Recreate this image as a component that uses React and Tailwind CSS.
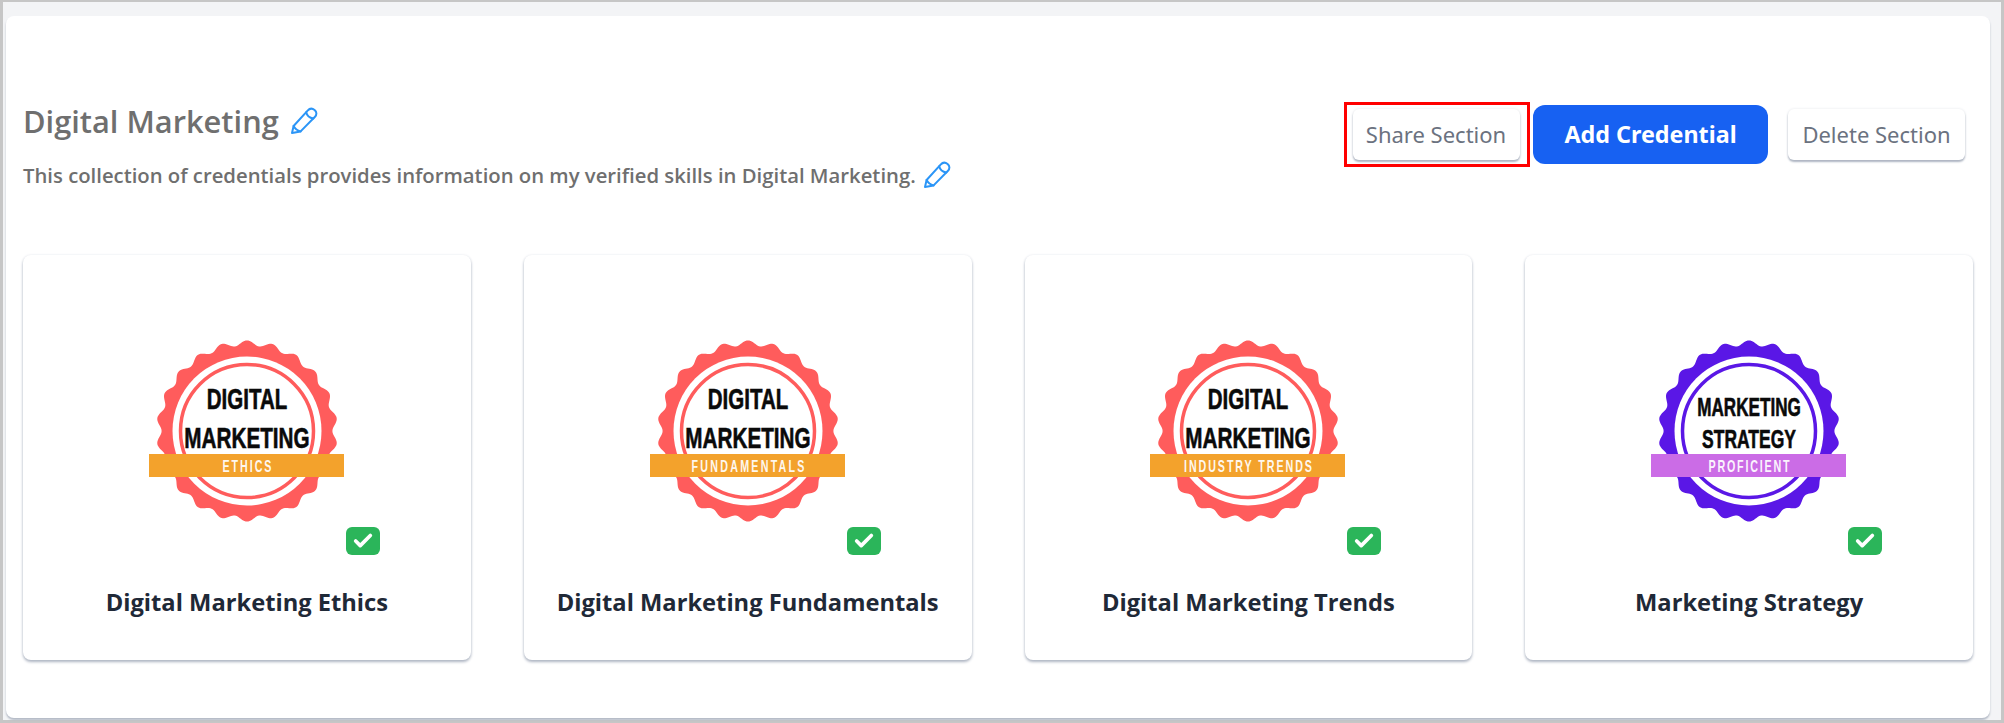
import { Check } from 'lucide-react';

// scalloped seal edge, 22 bumps
function sealPath(cx, cy) {
    const pts = [];
    for (let i = 0; i < 440; i++) {
        const t = (i / 440) * Math.PI * 2;
        const r = 88 + 2.6 * Math.cos(22 * t);
        pts.push(`${(cx + r * Math.sin(t)).toFixed(2)},${(cy - r * Math.cos(t)).toFixed(2)}`);
    }
    return `M${pts.join('L')}Z`;
}

function Seal({ color, ribbon, lines, label, labelWidth }) {
    return (
        <svg width="200" height="184" viewBox="0 0 200 184">
            <path d={sealPath(100, 92)} fill={color} />
            <circle cx="100" cy="92" r="74.5" fill="#fff" />
            <circle cx="100" cy="92" r="66.5" fill="none" stroke={color} strokeWidth="3.5" />
            {lines.map((l) => (
                <g key={l.text} transform={`translate(100 ${l.y}) scale(${l.sx} 1)`}>
                    <text
                        textAnchor="middle"
                        fontFamily="'Liberation Sans', sans-serif"
                        fontWeight="700"
                        fontSize={l.size}
                        fill="#0a0a0a"
                        stroke="#0a0a0a"
                        strokeWidth="0.6"
                    >
                        {l.text}
                    </text>
                </g>
            ))}
            <rect x="2" y="115" width="195" height="23" fill={ribbon} />
            <g transform="translate(100 133) scale(0.65 1)">
                <text
                    textAnchor="middle"
                    textLength={labelWidth / 0.65}
                    lengthAdjust="spacing"
                    fontFamily="'Liberation Sans', sans-serif"
                    fontWeight="700"
                    fontSize="16.5"
                    fill="#fff"
                    opacity="0.92"
                >
                    {label}
                </text>
            </g>
        </svg>
    );
}

function PencilIcon({ className }) {
    return (
        <svg className={className} viewBox="0 0 28 28" fill="none" stroke="#2b95f7" strokeWidth="2" strokeLinejoin="round" strokeLinecap="round">
            <path d="M2 26 L3.6 19 L17.6 3.6 C19.6 1.4 22.4 1.2 24.6 3 C26.8 4.9 27 7.6 25 9.8 L10.6 24.4 Z" />
            <path d="M16.2 5.2 C16.8 8 19.6 10.8 23.4 11.4" />
            <path d="M3.6 19 C5 21.6 7.4 23.6 10.6 24.4" />
        </svg>
    );
}

const digital = [
    { text: 'DIGITAL', y: 70, sx: 0.683, size: 30 },
    { text: 'MARKETING', y: 109, sx: 0.69, size: 30 },
];

const credentials = [
    { title: 'Digital Marketing Ethics', color: '#ff5c5c', ribbon: '#f3a22c', lines: digital, label: 'ETHICS', labelWidth: 49 },
    { title: 'Digital Marketing Fundamentals', color: '#ff5c5c', ribbon: '#f3a22c', lines: digital, label: 'FUNDAMENTALS', labelWidth: 113 },
    { title: 'Digital Marketing Trends', color: '#ff5c5c', ribbon: '#f3a22c', lines: digital, label: 'INDUSTRY TRENDS', labelWidth: 128 },
    {
        title: 'Marketing Strategy',
        color: '#5a17e6',
        ribbon: '#cb6ce6',
        lines: [
            { text: 'MARKETING', y: 77, sx: 0.685, size: 25 },
            { text: 'STRATEGY', y: 109, sx: 0.7, size: 25 },
        ],
        label: 'PROFICIENT',
        labelWidth: 81,
    },
];

const sectionButton = 'h-[51px] rounded-md bg-white shadow-[0_2px_2px_#aeb5c2,0_0_3px_#e5e7eb] text-[22px] text-[#6b7280]';

export default function App() {
    return (
        <div className="w-[2004px] h-[723px] border-t-2 border-l-[3px] border-r-[3px] border-b-[3px] border-[#c6c6c6] bg-[#f3f4f6] pt-[14px] pl-[3px] font-['Noto_Sans',sans-serif]">
            <div className="w-[1984px] h-[702px] rounded-lg bg-white shadow-[0_2px_2px_#b4bac6] pt-[85px] pl-[17px] pr-[17px]">
                {/* Section header */}
                <div className="flex justify-between pr-[8px]">
                    <div>
                        <div className="flex items-center gap-[11px] h-[40px]">
                            <h1 className="text-[30.8px] leading-[40px] font-semibold text-[#6f6f6f] font-['Open_Sans',sans-serif]">Digital Marketing</h1>
                            <PencilIcon className="w-[28px] h-[28px]" />
                        </div>
                        <div className="flex items-center gap-[7px] h-[28px] mt-[20px]">
                            <p className="text-[20.3px] leading-[28px] font-semibold text-[#6f6f6f] font-['Open_Sans',sans-serif]">
                                This collection of credentials provides information on my verified skills in Digital Marketing.
                            </p>
                            <PencilIcon className="w-[28px] h-[28px]" />
                        </div>
                    </div>
                    <div className="flex items-center h-[65px] mt-[1px]">
                        <div className="flex items-center justify-center w-[186px] h-[65px] border-[3px] border-[#ff0000]">
                            <button className={`${sectionButton} w-[167px] mr-[2px]`}>Share Section</button>
                        </div>
                        <button className="ml-[3px] w-[235px] h-[59px] rounded-xl bg-[#1761f2] text-[23.3px] font-bold text-white">Add Credential</button>
                        <button className={`${sectionButton} ml-[20px] w-[177px]`}>Delete Section</button>
                    </div>
                </div>
                {/* Credential cards */}
                <div className="grid grid-cols-4 gap-x-[53px] mt-[66px]">
                    {credentials.map((c) => (
                        <div key={c.title} className="h-[405px] rounded-lg bg-white shadow-[0_2px_3px_#aeb5c2,0_0_3px_#eceef2] flex flex-col items-center pt-[84px]">
                            <div className="relative w-[200px] h-[184px]">
                                <Seal color={c.color} ribbon={c.ribbon} lines={c.lines} label={c.label} labelWidth={c.labelWidth} />
                                <div className="absolute left-[199px] top-[188px] w-[34px] h-[28px] rounded-md bg-[#2bb55a] flex items-center justify-center">
                                    <Check className="w-[22px] h-[22px] text-white" strokeWidth={4} />
                                </div>
                            </div>
                            <h2 className="mt-[63px] text-[23.7px] leading-[32px] font-bold text-[#1f2937] font-['Open_Sans',sans-serif]">{c.title}</h2>
                        </div>
                    ))}
                </div>
            </div>
        </div>
    );
}
